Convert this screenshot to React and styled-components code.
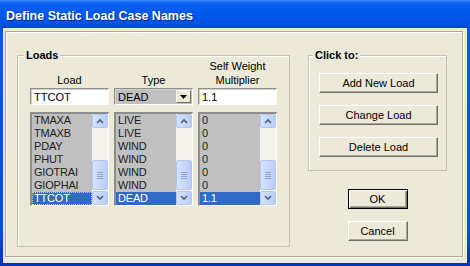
import styled, { createGlobalStyle } from 'styled-components';

const loads = [
	{ name: 'TMAXA', type: 'LIVE', mult: '0' },
	{ name: 'TMAXB', type: 'LIVE', mult: '0' },
	{ name: 'PDAY', type: 'WIND', mult: '0' },
	{ name: 'PHUT', type: 'WIND', mult: '0' },
	{ name: 'GIOTRAI', type: 'WIND', mult: '0' },
	{ name: 'GIOPHAI', type: 'WIND', mult: '0' },
	{ name: 'TTCOT', type: 'DEAD', mult: '1.1' },
];

const selected = 6;

function Chevron({ up }) {
	return (
		<svg width="8" height="6" viewBox="0 0 8 6">
			<path
				d={up ? 'M1 5 L4 2 L7 5' : 'M1 1 L4 4 L7 1'}
				fill="none"
				stroke="#4D6185"
				strokeWidth="1.6"
			/>
		</svg>
	);
}

function ScrollBar() {
	return (
		<Scroll>
			<ArrowBtn>
				<Chevron up />
			</ArrowBtn>
			<Track>
				<Thumb>
					<Grip />
					<Grip />
					<Grip />
					<Grip />
				</Thumb>
			</Track>
			<ArrowBtn>
				<Chevron />
			</ArrowBtn>
		</Scroll>
	);
}

function ListBox({ field }) {
	return (
		<List>
			<Rows>
				{loads.map((row, i) => (
					<Row key={i} $selected={i === selected} $focus={field === 'name' && i === selected}>
						<span>{row[field]}</span>
					</Row>
				))}
			</Rows>
			<ScrollBar />
		</List>
	);
}

function App() {
	return (
		<>
			<GlobalStyle />
			<Window>
				<TitleBar>Define Static Load Case Names</TitleBar>
				<Frame>
					<Body>
						<Panel>
							<LoadsGroup>
								<Legend>Loads</Legend>
								<Columns>
									<Column>
										<Header>Load</Header>
										<TextBox>TTCOT</TextBox>
										<ListBox field="name" />
									</Column>
									<Column>
										<Header>Type</Header>
										<Combo>
											<span>DEAD</span>
											<DropBtn>
												<svg width="7" height="4" viewBox="0 0 7 4">
													<path d="M0 0 H7 L3.5 4 Z" fill="#000" />
												</svg>
											</DropBtn>
										</Combo>
										<ListBox field="type" />
									</Column>
									<Column>
										<Header>
											Self Weight
											<br />
											Multiplier
										</Header>
										<TextBox>1.1</TextBox>
										<ListBox field="mult" />
									</Column>
								</Columns>
							</LoadsGroup>
							<Side>
								<ClickGroup>
									<Legend $left={4}>Click to:</Legend>
									<Actions>
										<Button $width={119}>Add New Load</Button>
										<Button $width={119}>Change Load</Button>
										<Button $width={119}>Delete Load</Button>
									</Actions>
								</ClickGroup>
								<Button $width={60} $default $top={18}>
									OK
								</Button>
								<Button $width={60} $top={12}>
									Cancel
								</Button>
							</Side>
						</Panel>
					</Body>
				</Frame>
			</Window>
		</>
	);
}

const GlobalStyle = createGlobalStyle`
	body {
		margin: 0;
		background: #ECE9D8;
	}
`;

const Window = styled.div`
	width: 470px;
	height: 266px;
	display: flex;
	flex-direction: column;
	font-family: 'Liberation Sans', Arial, sans-serif;
	font-size: 11px;
	color: #000;
	overflow: hidden;
`;

const TitleBar = styled.div`
	height: 28px;
	flex-shrink: 0;
	box-sizing: border-box;
	padding: 3px 0 0 6px;
	display: flex;
	align-items: center;
	color: #fff;
	font-weight: bold;
	font-size: 12.5px;
	text-shadow: 1px 1px 0 #0A2A8A;
	background: linear-gradient(
		180deg,
		#3C8DFF 0%,
		#0E62F0 10%,
		#0058EE 45%,
		#0055E6 80%,
		#0048D0 100%
	);
`;

const Frame = styled.div`
	flex: 1;
	display: flex;
	padding: 0 3px 3px 3px;
	background: linear-gradient(180deg, #0058EE 0%, #0050E0 85%, #0A2FB8 100%);
`;

const Body = styled.div`
	flex: 1;
	display: flex;
	padding: 3px 4px 6px 2px;
	background: #ECE9D8;
`;

const Panel = styled.div`
	flex: 1;
	display: flex;
	align-items: flex-start;
	gap: 18px;
	padding: 17px 15px 9px 11px;
	border: 1px solid #ACA899;
	box-shadow: inset 1px 1px 0 #fff, 1px 1px 0 #fff;
`;

const Group = styled.fieldset`
	margin: 0;
	padding: 0;
	border: 1px solid #C5C2B2;
	box-shadow: inset 1px 1px 0 #fff;
	min-width: 0;
`;

const LoadsGroup = styled(Group)`
	width: 273px;
	box-sizing: border-box;
	align-self: stretch;
`;

const ClickGroup = styled(Group)`
	width: 139px;
	height: 122px;
	box-sizing: border-box;
`;

const Legend = styled.legend`
	margin-left: ${(p) => p.$left ?? 6}px;
	padding: 0 2px;
	font-weight: bold;
	font-size: 11px;
	line-height: 13px;
	background: #ECE9D8;
`;

const Columns = styled.div`
	display: flex;
	gap: 5px;
	padding: 0 11px 0 12px;
	margin-top: -3px;
`;

const Column = styled.div`
	width: 79px;
	display: flex;
	flex-direction: column;
`;

const Header = styled.div`
	height: 29px;
	display: flex;
	align-items: flex-end;
	justify-content: center;
	text-align: center;
	line-height: 14px;
	padding-bottom: 1px;
	box-sizing: border-box;
	color: #000;
`;

const Field = styled.div`
	height: 17px;
	box-sizing: border-box;
	display: flex;
	align-items: center;
	padding-left: 3px;
	border-top: 1px solid #8E8E8E;
	border-left: 1px solid #8E8E8E;
	border-right: 1px solid #fff;
	border-bottom: 1px solid #fff;
	box-shadow: inset 1px 1px 0 #D4D0C8;
	font-size: 11px;
`;

const TextBox = styled(Field)`
	background: #fff;
`;

const Combo = styled(Field)`
	background: #C0C0C0;
	justify-content: space-between;
	padding-right: 1px;
`;

const DropBtn = styled.div`
	width: 15px;
	height: 13px;
	box-sizing: border-box;
	display: flex;
	align-items: center;
	justify-content: center;
	background: #ECE9D8;
	border-top: 1px solid #fff;
	border-left: 1px solid #fff;
	border-right: 1px solid #716F64;
	border-bottom: 1px solid #716F64;
`;

const List = styled.div`
	margin-top: 7px;
	height: 94px;
	box-sizing: border-box;
	display: flex;
	background: #C0C0C0;
	border-top: 2px solid #8E8E8E;
	border-left: 2px solid #8E8E8E;
	border-right: 1px solid #fff;
	border-bottom: 1px solid #fff;
`;

const Rows = styled.div`
	flex: 1;
	min-width: 0;
`;

const Row = styled.div`
	height: 13px;
	line-height: 13px;
	padding-left: 2px;
	font-size: 11px;
	letter-spacing: -0.2px;
	color: ${(p) => (p.$selected ? '#fff' : '#202020')};
	background: ${(p) => (p.$selected ? '#316AC5' : 'transparent')};
	outline: ${(p) => (p.$focus ? '1px dotted #D8D0A0' : 'none')};
	outline-offset: -1px;
	white-space: nowrap;
`;

const Scroll = styled.div`
	width: 16px;
	display: flex;
	flex-direction: column;
	background: #F4F3EE;
`;

const blueButton = `
	box-sizing: border-box;
	border: 1px solid #B4C6F2;
	border-radius: 2px;
	background: linear-gradient(90deg, #D6E2FD 0%, #C6D6FA 60%, #B9CCF6 100%);
`;

const ArrowBtn = styled.div`
	${blueButton}
	height: 14px;
	display: flex;
	align-items: center;
	justify-content: center;
`;

const Track = styled.div`
	flex: 1;
	display: flex;
	flex-direction: column;
	justify-content: flex-end;
	padding-bottom: 1px;
`;

const Thumb = styled.div`
	${blueButton}
	height: 30px;
	display: flex;
	flex-direction: column;
	align-items: center;
	justify-content: center;
	gap: 1px;
`;

const Grip = styled.div`
	width: 6px;
	height: 1px;
	background: #8CA6DC;
`;

const Side = styled.div`
	display: flex;
	flex-direction: column;
	align-items: center;
`;

const Actions = styled.div`
	display: flex;
	flex-direction: column;
	gap: 12px;
	padding: 11px 8px 0 10px;
`;

const Button = styled.div`
	width: ${(p) => p.$width}px;
	height: 20px;
	margin-top: ${(p) => p.$top ?? 0}px;
	box-sizing: border-box;
	display: flex;
	align-items: center;
	justify-content: center;
	font-size: 11px;
	background: #ECE9D8;
	border-top: 1px solid ${(p) => (p.$default ? '#000' : '#fff')};
	border-left: 1px solid ${(p) => (p.$default ? '#000' : '#fff')};
	border-right: 1px solid ${(p) => (p.$default ? '#000' : '#716F64')};
	border-bottom: 1px solid ${(p) => (p.$default ? '#000' : '#716F64')};
	box-shadow: ${(p) =>
		p.$default
			? 'inset 1px 1px 0 #fff, inset -1px -1px 0 #716F64, inset -2px -2px 0 #ACA899'
			: 'inset -1px -1px 0 #ACA899'};
`;

export default App;
